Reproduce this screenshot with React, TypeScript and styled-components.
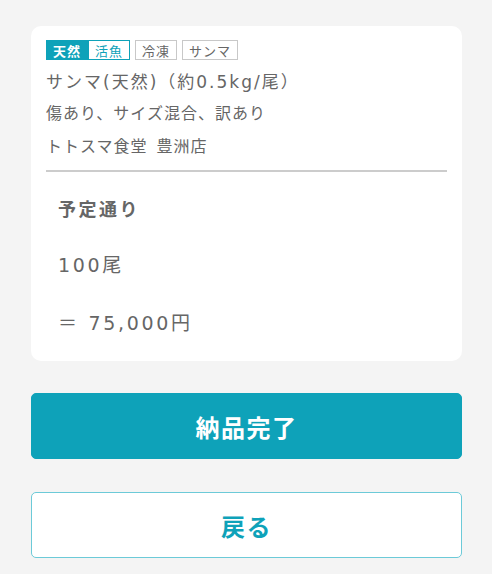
import styled, { createGlobalStyle } from "styled-components";

const GlobalStyle = createGlobalStyle`
  html, body {
    margin: 0;
    padding: 0;
    background: #f4f4f4;
  }
  body {
    font-family: "DejaVu Sans", "Noto Sans CJK JP", sans-serif;
    color: #666;
  }
`;

const Page = styled.div`
  padding: 26px 30px 16px 31px;
  display: flex;
  flex-direction: column;
`;

const Card = styled.div`
  background: #fff;
  border-radius: 10px;
  padding: 14px 15px 24px;
`;

const TagRow = styled.div`
  display: flex;
  gap: 5px;
`;

const TagGroup = styled.div`
  display: flex;
`;

const Tag = styled.span<{ $variant: "fill" | "outline" | "plain" }>`
  display: inline-flex;
  align-items: center;
  height: 20px;
  box-sizing: border-box;
  padding: 0 6px;
  font-family: "Noto Sans CJK JP", sans-serif;
  font-size: 13px;
  letter-spacing: 1px;
  border: 1px solid
    ${(p) => (p.$variant === "plain" ? "#c8c8c8" : "#0ea2b9")};
  background: ${(p) => (p.$variant === "fill" ? "#0ea2b9" : "#fff")};
  color: ${(p) =>
    p.$variant === "fill" ? "#fff" : p.$variant === "outline" ? "#0ea2b9" : "#666"};
  font-weight: ${(p) => (p.$variant === "fill" ? 700 : 400)};
`;

const Title = styled.div`
  margin-top: 7px;
  font-size: 17px;
  line-height: 30px;
  letter-spacing: 2px;
`;

const SubLine = styled.div`
  font-size: 16px;
  line-height: 33px;
  letter-spacing: 1px;
  word-spacing: 3px;
`;

const Divider = styled.hr`
  margin: 7px 0 0;
  border: none;
  border-top: 2px solid #ccc;
`;

const Detail = styled.div`
  padding: 23px 12px 0;
  display: flex;
  flex-direction: column;
  gap: 30px;
`;

const Status = styled.div`
  font-family: "Noto Sans CJK JP", sans-serif;
  font-size: 18px;
  font-weight: 700;
  line-height: 26px;
  letter-spacing: 2.5px;
`;

const Amount = styled.div`
  font-size: 19px;
  line-height: 28px;
  letter-spacing: 2.7px;
`;

const Button = styled.button<{ $primary?: boolean }>`
  height: 66px;
  border-radius: 5px;
  font-family: "Noto Sans CJK JP", sans-serif;
  font-size: 24px;
  font-weight: 700;
  letter-spacing: 1.5px;
  border: 1px solid ${(p) => (p.$primary ? "#0ea2b9" : "#6ccad8")};
  background: ${(p) => (p.$primary ? "#0ea2b9" : "#fff")};
  color: ${(p) => (p.$primary ? "#fff" : "#0ea2b9")};
  margin-top: ${(p) => (p.$primary ? "32px" : "33px")};
`;

export default function App() {
  return (
    <>
      <GlobalStyle />
      <Page>
        <Card>
          <TagRow>
            <TagGroup>
              <Tag $variant="fill">天然</Tag>
              <Tag $variant="outline">活魚</Tag>
            </TagGroup>
            <Tag $variant="plain">冷凍</Tag>
            <Tag $variant="plain">サンマ</Tag>
          </TagRow>
          <Title>サンマ(天然)（約0.5kg/尾）</Title>
          <SubLine>傷あり、サイズ混合、訳あり</SubLine>
          <SubLine>トトスマ食堂 豊洲店</SubLine>
          <Divider />
          <Detail>
            <Status>予定通り</Status>
            <Amount>100尾</Amount>
            <Amount>＝ 75,000円</Amount>
          </Detail>
        </Card>
        <Button $primary>納品完了</Button>
        <Button>戻る</Button>
      </Page>
    </>
  );
}
